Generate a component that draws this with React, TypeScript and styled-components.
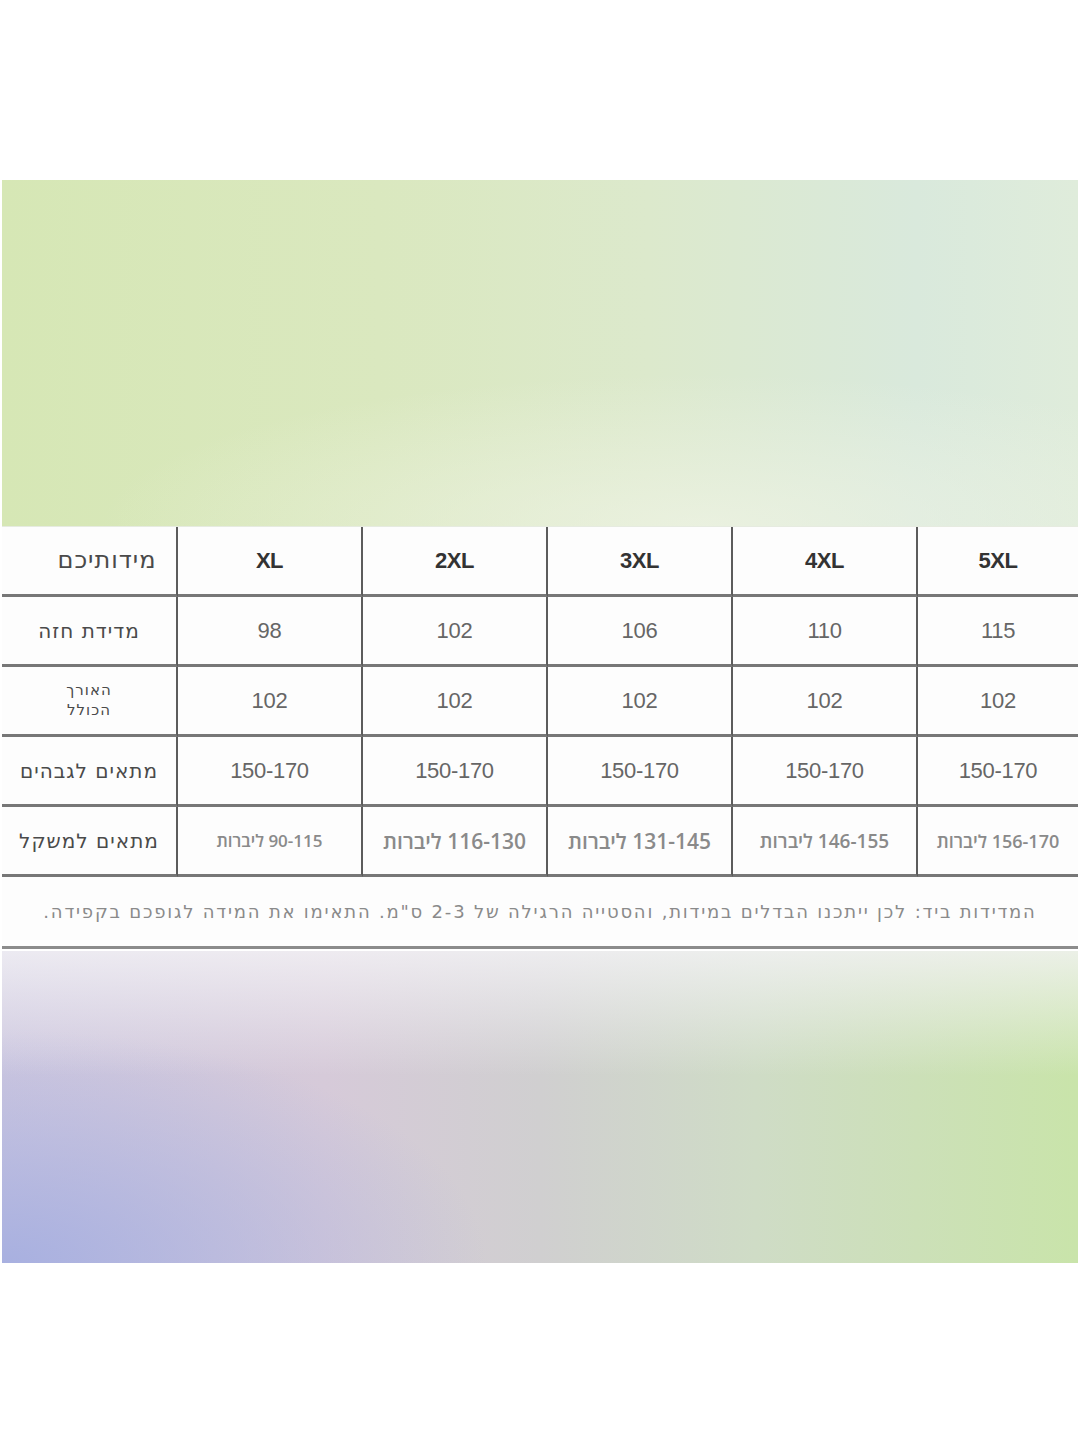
import styled, { createGlobalStyle } from "styled-components";

const GlobalStyle = createGlobalStyle`
  body {
    margin: 0;
    background: #ffffff;
    font-family: "Liberation Sans", "DejaVu Sans", sans-serif;
  }
`;

const Page = styled.div`
  width: 1080px;
  height: 1440px;
  padding: 180px 2px 0;
  box-sizing: border-box;
`;

const TopPanel = styled.div`
  height: 346px;
  background:
    radial-gradient(ellipse 70% 55% at 65% 100%, rgba(240, 244, 230, 0.7), rgba(240, 244, 230, 0) 80%),
    linear-gradient(90deg, #d6e7b5 0%, #dae8bf 35%, #dce9cc 60%, #d9e9dc 85%, #dfecdb 100%);
`;

const SizeTable = styled.div`
  display: grid;
  grid-template-columns: 176px repeat(4, 185px) 1fr;
  grid-auto-rows: 70px;
  background: #fdfdfd;
  border-top: 1px solid #e6ebe0;
`;

const Cell = styled.div<{ $last?: boolean; $shift?: number }>`
  display: flex;
  align-items: center;
  justify-content: center;
  text-align: center;
  padding-left: ${(p) => p.$shift ?? 0}px;
  border-bottom: 3px solid #777;
  border-right: ${(p) => (p.$last ? "none" : "2px solid #5c5c5c")};
  box-sizing: border-box;
`;

const Label = styled.span<{ $size: number }>`
  font-family: "DejaVu Sans", sans-serif;
  font-size: ${(p) => p.$size}px;
  line-height: 1.3;
  color: #4a4a4a;
  letter-spacing: 1px;
`;

const SizeName = styled.span`
  font-family: "Liberation Sans", Arial, sans-serif;
  font-weight: 700;
  font-size: 22px;
  color: #333;
  letter-spacing: -0.5px;
`;

const Value = styled.span`
  font-family: "Liberation Sans", Arial, sans-serif;
  font-size: 22px;
  color: #666;
  letter-spacing: -0.3px;
`;

const Range = styled.span<{ $size: number }>`
  font-family: "Open Sans", "DejaVu Sans", sans-serif;
  font-weight: 600;
  font-size: ${(p) => p.$size}px;
  color: #8a8a8a;
  white-space: nowrap;
`;

const NoteRow = styled.div`
  height: 72px;
  display: flex;
  align-items: center;
  justify-content: center;
  background: #fdfdfd;
  border-bottom: 3px solid #8c8c8c;
  box-sizing: border-box;
`;

const Note = styled.p`
  margin: 0;
  font-family: "DejaVu Sans", sans-serif;
  font-size: 18px;
  color: #8a8a8a;
  letter-spacing: 1.8px;
  white-space: nowrap;
`;

const BottomPanel = styled.div`
  margin-top: 2px;
  height: 312px;
  background:
    linear-gradient(180deg, rgba(244, 243, 246, 0.8) 0%, rgba(244, 243, 246, 0) 40%),
    radial-gradient(ellipse 45% 75% at 0% 100%, #a8b0e0, rgba(168, 176, 224, 0) 100%),
    linear-gradient(90deg, #cdc7df 0%, #d6cad9 30%, #d0cfd0 50%, #cfdcc6 70%, #c9e4aa 100%);
`;

const sizes = ["XL", "2XL", "3XL", "4XL", "5XL"];
const chest = ["98", "102", "106", "110", "115"];
const length = ["102", "102", "102", "102", "102"];
const height = ["150-170", "150-170", "150-170", "150-170", "150-170"];
const weight = [
  { text: "90-115", size: 17 },
  { text: "116-130", size: 21 },
  { text: "131-145", size: 21 },
  { text: "146-155", size: 19 },
  { text: "156-170", size: 18 },
];

export default function App() {
  return (
    <>
      <GlobalStyle />
      <Page>
        <TopPanel />
        <SizeTable>
          <Cell $shift={36}>
            <Label $size={24}>מידותיכם</Label>
          </Cell>
          {sizes.map((s, i) => (
            <Cell key={s} $last={i === 4}>
              <SizeName>{s}</SizeName>
            </Cell>
          ))}

          <Cell>
            <Label $size={20}>מדידת חזה</Label>
          </Cell>
          {chest.map((v, i) => (
            <Cell key={"c" + i} $last={i === 4}>
              <Value>{v}</Value>
            </Cell>
          ))}

          <Cell>
            <Label $size={15}>
              האורך
              <br />
              הכולל
            </Label>
          </Cell>
          {length.map((v, i) => (
            <Cell key={"l" + i} $last={i === 4}>
              <Value>{v}</Value>
            </Cell>
          ))}

          <Cell>
            <Label $size={20}>מתאים לגבהים</Label>
          </Cell>
          {height.map((v, i) => (
            <Cell key={"h" + i} $last={i === 4}>
              <Value>{v}</Value>
            </Cell>
          ))}

          <Cell>
            <Label $size={20}>מתאים למשקל</Label>
          </Cell>
          {weight.map((w, i) => (
            <Cell key={"w" + i} $last={i === 4}>
              <Range $size={w.size}>{"ליברות\u200E " + w.text}</Range>
            </Cell>
          ))}
        </SizeTable>
        <NoteRow>
          <Note dir="rtl">
            המדידות ביד: לכן ייתכנו הבדלים במידות, והסטייה הרגילה של 2-3 ס"מ. התאימו את המידה לגופכם בקפידה.
          </Note>
        </NoteRow>
        <BottomPanel />
      </Page>
    </>
  );
}
